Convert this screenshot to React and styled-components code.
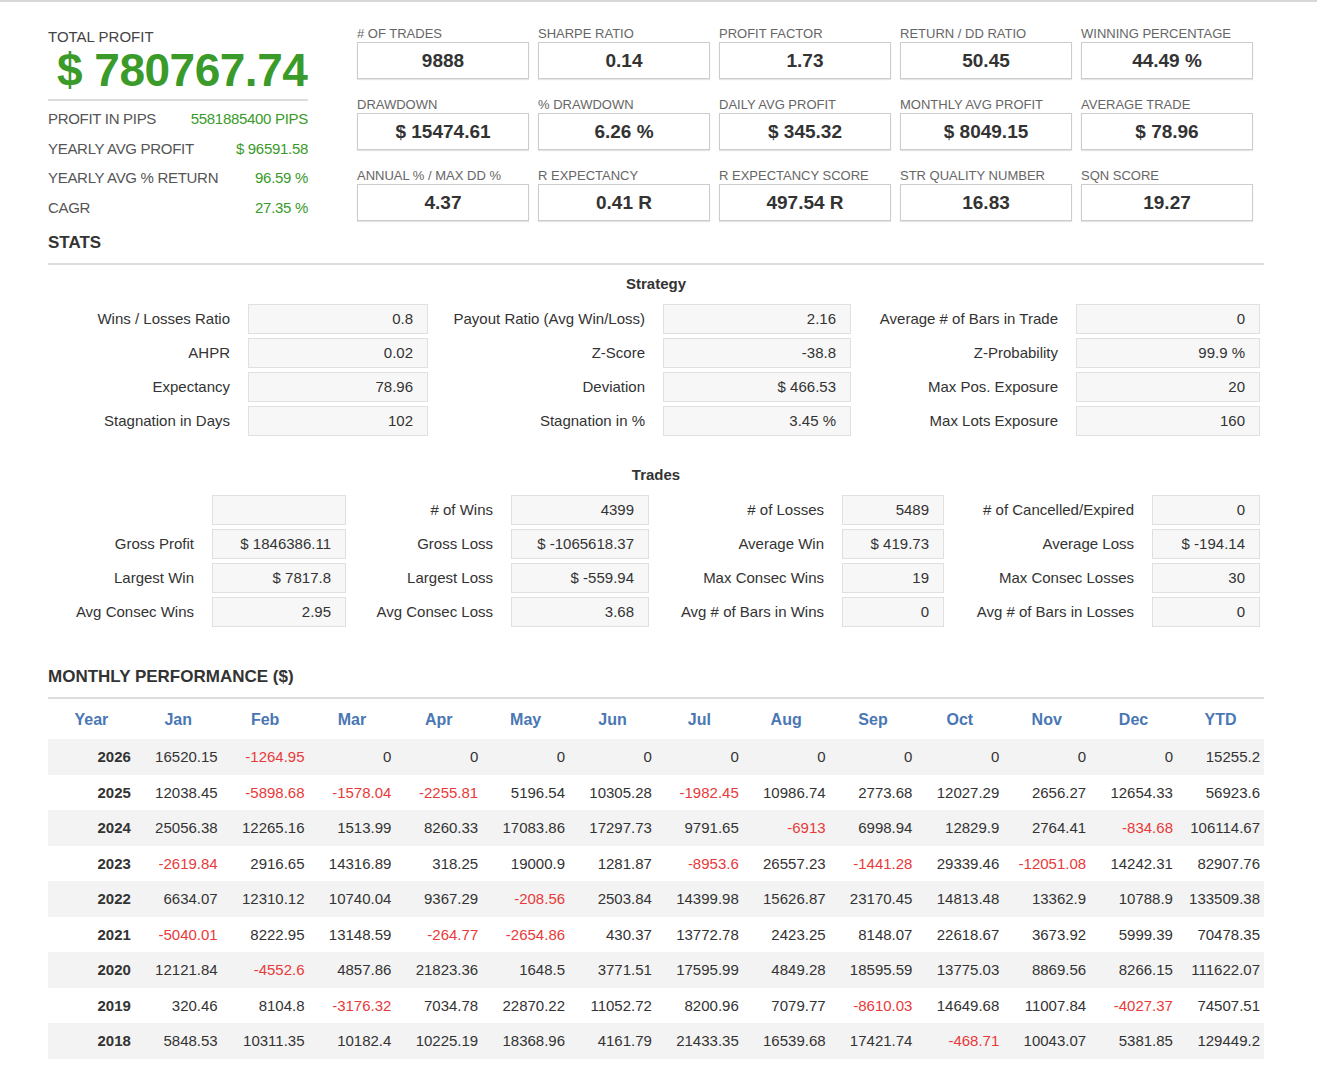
import React from "react";
import styled, { createGlobalStyle } from "styled-components";

const Global = createGlobalStyle`
  body { margin: 0; background: #fff; font-family: "Liberation Sans", Arial, sans-serif; color: #333; }
`;

const Page = styled.div`
  border-top: 2px solid #d8d8d8;
  padding: 20px 53px 20px 48px;
`;

const Top = styled.div`
  display: flex;
  gap: 49px;
`;

const Left = styled.div`
  width: 260px;
  padding-top: 6px;
`;

const TotalLabel = styled.div`
  font-size: 15px;
  color: #444;
`;

const Big = styled.div`
  font-weight: bold;
  font-size: 46px;
  color: #3a9a2a;
  padding: 0 0 4px 9px;
  line-height: 50px;
  border-bottom: 2px solid #ddd;
  margin-bottom: 6px;
  letter-spacing: -0.5px;
`;

const KV = styled.div`
  display: flex;
  justify-content: space-between;
  font-size: 15px;
  height: 29.5px;
  line-height: 24px;
  color: #555;
  letter-spacing: -0.3px;
  span { color: #3a9a2a; }
`;

const Cards = styled.div`
  display: grid;
  grid-template-columns: repeat(5, 172px);
  column-gap: 9px;
  row-gap: 14px;
  padding-top: 4px;
`;

const Card = styled.div`
  font-size: 13px;
  color: #666;
  div {
    margin-top: 1px;
    height: 35px;
    border: 1px solid #ccc;
    box-shadow: 0 1px 1px #e4e4e4;
    display: flex;
    align-items: center;
    justify-content: center;
    font-size: 19px;
    font-weight: bold;
    color: #333;
  }
`;

const SectionTitle = styled.div`
  font-weight: bold;
  font-size: 17px;
  color: #333;
  padding-bottom: 10px;
  border-bottom: 2px solid #ddd;
  margin-top: ${p => p.$mt}px;
`;

const SubTitle = styled.div`
  text-align: center;
  font-weight: bold;
  font-size: 15px;
  padding: ${p => p.$pt}px 0 12px;
  color: #333;
`;

const Grid = styled.div`
  display: grid;
  grid-template-columns: ${p => p.$cols};
  row-gap: 4px;
  font-size: 15px;
`;

const Lbl = styled.div`
  text-align: right;
  line-height: 30px;
  padding-right: 18px;
  color: #333;
  white-space: nowrap;
`;

const Box = styled.div`
  height: 28px;
  line-height: 28px;
  background: #f7f7f7;
  border: 1px solid #e0e0e0;
  text-align: right;
  padding-right: 14px;
  color: #333;
`;

const Table = styled.table`
  width: 100%;
  border-collapse: collapse;
  margin-top: 2px;
  table-layout: fixed;
  font-size: 15px;
  th { color: #4a77b4; font-weight: bold; font-size: 16px; height: 38px; text-align: center; padding: 0; }
  td { text-align: right; height: 35.5px; padding: 0 4px 0 0; color: #333; }
  td:first-child { font-weight: bold; }
  tbody tr:nth-child(odd) td { background: #f3f3f3; }
`;

const Neg = styled.span`color: #e83a3a;`;

const cards = [
  ["# OF TRADES", "9888"], ["SHARPE RATIO", "0.14"], ["PROFIT FACTOR", "1.73"], ["RETURN / DD RATIO", "50.45"], ["WINNING PERCENTAGE", "44.49 %"],
  ["DRAWDOWN", "$ 15474.61"], ["% DRAWDOWN", "6.26 %"], ["DAILY AVG PROFIT", "$ 345.32"], ["MONTHLY AVG PROFIT", "$ 8049.15"], ["AVERAGE TRADE", "$ 78.96"],
  ["ANNUAL % / MAX DD %", "4.37"], ["R EXPECTANCY", "0.41 R"], ["R EXPECTANCY SCORE", "497.54 R"], ["STR QUALITY NUMBER", "16.83"], ["SQN SCORE", "19.27"],
];

const strategy = [
  ["Wins / Losses Ratio", "0.8", "Payout Ratio (Avg Win/Loss)", "2.16", "Average # of Bars in Trade", "0"],
  ["AHPR", "0.02", "Z-Score", "-38.8", "Z-Probability", "99.9 %"],
  ["Expectancy", "78.96", "Deviation", "$ 466.53", "Max Pos. Exposure", "20"],
  ["Stagnation in Days", "102", "Stagnation in %", "3.45 %", "Max Lots Exposure", "160"],
];

const trades = [
  ["", "", "# of Wins", "4399", "# of Losses", "5489", "# of Cancelled/Expired", "0"],
  ["Gross Profit", "$ 1846386.11", "Gross Loss", "$ -1065618.37", "Average Win", "$ 419.73", "Average Loss", "$ -194.14"],
  ["Largest Win", "$ 7817.8", "Largest Loss", "$ -559.94", "Max Consec Wins", "19", "Max Consec Losses", "30"],
  ["Avg Consec Wins", "2.95", "Avg Consec Loss", "3.68", "Avg # of Bars in Wins", "0", "Avg # of Bars in Losses", "0"],
];

const months = ["Year", "Jan", "Feb", "Mar", "Apr", "May", "Jun", "Jul", "Aug", "Sep", "Oct", "Nov", "Dec", "YTD"];
const perf = [
  ["2026", "16520.15", "-1264.95", "0", "0", "0", "0", "0", "0", "0", "0", "0", "0", "15255.2"],
  ["2025", "12038.45", "-5898.68", "-1578.04", "-2255.81", "5196.54", "10305.28", "-1982.45", "10986.74", "2773.68", "12027.29", "2656.27", "12654.33", "56923.6"],
  ["2024", "25056.38", "12265.16", "1513.99", "8260.33", "17083.86", "17297.73", "9791.65", "-6913", "6998.94", "12829.9", "2764.41", "-834.68", "106114.67"],
  ["2023", "-2619.84", "2916.65", "14316.89", "318.25", "19000.9", "1281.87", "-8953.6", "26557.23", "-1441.28", "29339.46", "-12051.08", "14242.31", "82907.76"],
  ["2022", "6634.07", "12310.12", "10740.04", "9367.29", "-208.56", "2503.84", "14399.98", "15626.87", "23170.45", "14813.48", "13362.9", "10788.9", "133509.38"],
  ["2021", "-5040.01", "8222.95", "13148.59", "-264.77", "-2654.86", "430.37", "13772.78", "2423.25", "8148.07", "22618.67", "3673.92", "5999.39", "70478.35"],
  ["2020", "12121.84", "-4552.6", "4857.86", "21823.36", "1648.5", "3771.51", "17595.99", "4849.28", "18595.59", "13775.03", "8869.56", "8266.15", "111622.07"],
  ["2019", "320.46", "8104.8", "-3176.32", "7034.78", "22870.22", "11052.72", "8200.96", "7079.77", "-8610.03", "14649.68", "11007.84", "-4027.37", "74507.51"],
  ["2018", "5848.53", "10311.35", "10182.4", "10225.19", "18368.96", "4161.79", "21433.35", "16539.68", "17421.74", "-468.71", "10043.07", "5381.85", "129449.2"],
];

const Pair = ({ l, v }) => (
  <>
    <Lbl>{l}</Lbl>
    <Box>{v}</Box>
  </>
);

export default function App() {
  return (
    <Page>
      <Global />
      <Top>
        <Left>
          <TotalLabel>TOTAL PROFIT</TotalLabel>
          <Big>$ 780767.74</Big>
          <KV>PROFIT IN PIPS<span>5581885400 PIPS</span></KV>
          <KV>YEARLY AVG PROFIT<span>$ 96591.58</span></KV>
          <KV>YEARLY AVG % RETURN<span>96.59 %</span></KV>
          <KV>CAGR<span>27.35 %</span></KV>
        </Left>
        <Cards>
          {cards.map(([l, v]) => (
            <Card key={l}>{l}<div>{v}</div></Card>
          ))}
        </Cards>
      </Top>
      <SectionTitle $mt={8}>STATS</SectionTitle>
      <SubTitle $pt={10}>Strategy</SubTitle>
      <Grid $cols="200px 180px 235px 188px 225px 184px">
        {strategy.map(r => (
          <React.Fragment key={r[0]}>
            <Pair l={r[0]} v={r[1]} /><Pair l={r[2]} v={r[3]} /><Pair l={r[4]} v={r[5]} />
          </React.Fragment>
        ))}
      </Grid>
      <SubTitle $pt={30}>Trades</SubTitle>
      <Grid $cols="164px 134px 165px 138px 193px 102px 208px 108px">
        {trades.map(r => (
          <React.Fragment key={r[2]}>
            <Pair l={r[0]} v={r[1]} /><Pair l={r[2]} v={r[3]} /><Pair l={r[4]} v={r[5]} /><Pair l={r[6]} v={r[7]} />
          </React.Fragment>
        ))}
      </Grid>
      <SectionTitle $mt={40}>MONTHLY PERFORMANCE ($)</SectionTitle>
      <Table>
        <thead>
          <tr>{months.map(m => <th key={m}>{m}</th>)}</tr>
        </thead>
        <tbody>
          {perf.map(r => (
            <tr key={r[0]}>
              {r.map((c, i) => (
                <td key={i}>{c.startsWith("-") ? <Neg>{c}</Neg> : c}</td>
              ))}
            </tr>
          ))}
        </tbody>
      </Table>
    </Page>
  );
}
